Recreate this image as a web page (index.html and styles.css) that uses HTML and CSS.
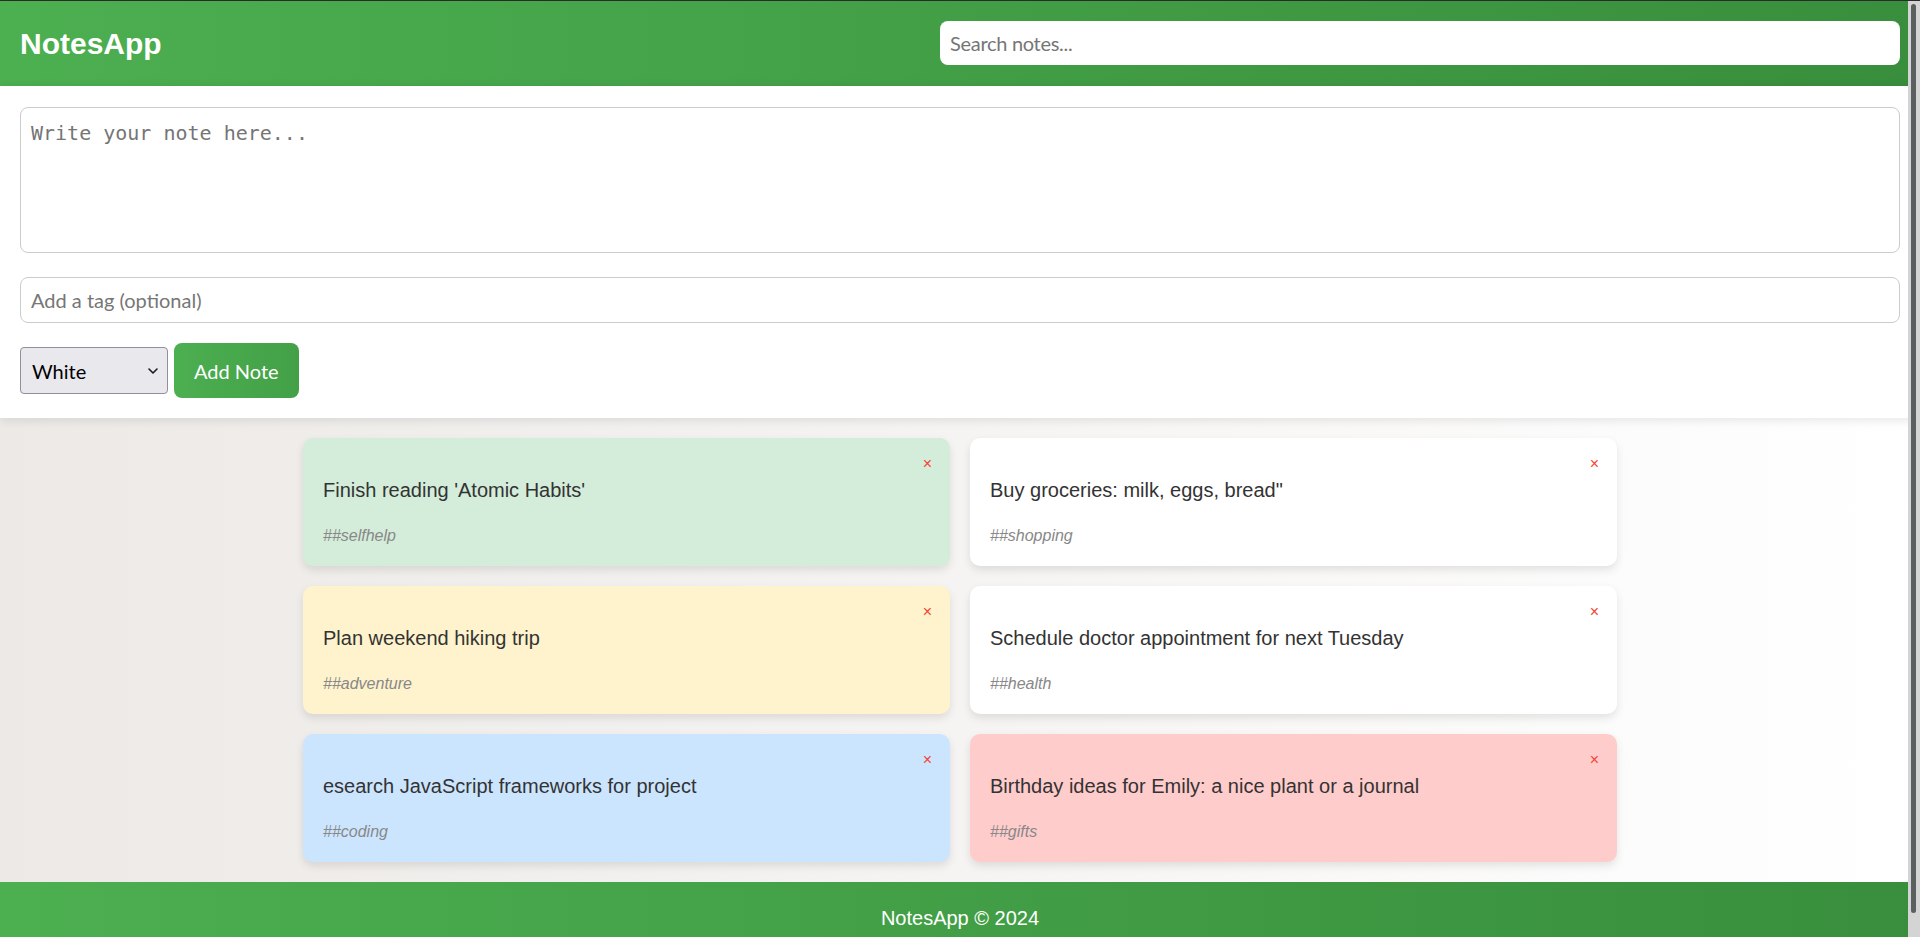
FILE: index.html
```html
<!DOCTYPE html>
<html lang="en">
<head>
<meta charset="UTF-8">
<title>NotesApp</title>
<link rel="stylesheet" href="styles.css">
</head>
<body>
<div class="window-edge"></div>
<div class="scroll-track"><div class="scroll-thumb"></div></div>

<header class="top-bar">
  <h1 class="brand">NotesApp</h1>
  <input class="search" type="text" placeholder="Search notes...">
</header>

<section class="composer">
  <textarea class="note-input" placeholder="Write your note here..."></textarea>
  <input class="tag-input" type="text" placeholder="Add a tag (optional)">
  <div class="controls">
    <div class="select-wrap">
      <select class="color-select">
        <option>White</option>
        <option>Green</option>
        <option>Yellow</option>
        <option>Blue</option>
        <option>Red</option>
      </select>
      <svg class="chevron" width="12" height="8" viewBox="0 0 12 8" aria-hidden="true">
        <path d="M2 2 L6 6 L10 2" fill="none" stroke="#1a1a1a" stroke-width="1.6" stroke-linecap="round" stroke-linejoin="round"/>
      </svg>
    </div>
    <button class="add-btn">Add Note</button>
  </div>
</section>

<main class="notes">
  <div class="note note-green">
    <button class="delete">×</button>
    <p class="note-text">Finish reading 'Atomic Habits'</p>
    <div class="note-tag">##selfhelp</div>
  </div>
  <div class="note note-white">
    <button class="delete">×</button>
    <p class="note-text">Buy groceries: milk, eggs, bread"</p>
    <div class="note-tag">##shopping</div>
  </div>
  <div class="note note-yellow">
    <button class="delete">×</button>
    <p class="note-text">Plan weekend hiking trip</p>
    <div class="note-tag">##adventure</div>
  </div>
  <div class="note note-white">
    <button class="delete">×</button>
    <p class="note-text">Schedule doctor appointment for next Tuesday</p>
    <div class="note-tag">##health</div>
  </div>
  <div class="note note-blue">
    <button class="delete">×</button>
    <p class="note-text">esearch JavaScript frameworks for project</p>
    <div class="note-tag">##coding</div>
  </div>
  <div class="note note-red">
    <button class="delete">×</button>
    <p class="note-text">Birthday ideas for Emily: a nice plant or a journal</p>
    <div class="note-tag">##gifts</div>
  </div>
</main>

<footer class="bottom-bar">NotesApp © 2024</footer>
</body>
</html>
```

FILE: styles.css
```css
html, body {
  margin: 0;
  padding: 0;
}

body {
  font-family: "Liberation Sans", Arial, sans-serif;
  font-size: 16px;
  background: linear-gradient(to right, #ece9e6, #ffffff);
  color: #333;
}

/* browser frame artefacts visible in the screenshot */
.window-edge {
  position: fixed;
  top: 0;
  left: 0;
  right: 0;
  height: 1px;
  background: #2b2b2b;
  z-index: 10;
}

.scroll-track {
  position: fixed;
  top: 0;
  right: 0;
  bottom: 0;
  width: 12px;
  background: #d4d4d4;
  z-index: 9;
}

.scroll-thumb {
  position: absolute;
  top: 4px;
  bottom: 24px;
  left: 3px;
  width: 5px;
  border-radius: 3px;
  background: #5a5f5f;
}

.top-bar {
  display: flex;
  justify-content: space-between;
  align-items: center;
  padding: 21px 20px;
  background: linear-gradient(to right, #4caf50, #388e3c);
}

.brand {
  margin: 2px 0 0;
  font-size: 30px;
  font-weight: bold;
  color: #fff;
}

.search {
  width: 50%;
  height: 24px;
  padding: 10px;
  border: none;
  border-radius: 8px;
  font-family: Lato, "Noto Sans", sans-serif;
  font-size: 20px;
  letter-spacing: -0.3px;
  background: #fff;
  outline: none;
}

.search::placeholder,
.tag-input::placeholder {
  color: #767676;
}

.composer {
  background: #fff;
  padding: 21px 20px 20px;
  box-shadow: 0 2px 10px rgba(0, 0, 0, 0.1);
  display: flex;
  flex-direction: column;
}

.note-input {
  display: block;
  box-sizing: border-box;
  width: 100%;
  height: 146px;
  padding: 13px 10px 10px;
  border: 1px solid #ccc;
  border-radius: 8px;
  font-family: "DejaVu Sans Mono", monospace;
  font-size: 20px;
  resize: none;
  margin: 0 0 24px;
}

.note-input::placeholder {
  color: #757575;
}

.tag-input {
  display: block;
  box-sizing: border-box;
  width: 100%;
  height: 46px;
  padding: 10px;
  border: 1px solid #ccc;
  border-radius: 8px;
  font-family: Lato, "Noto Sans", sans-serif;
  font-size: 20px;
  margin: 0 0 20px;
}

.controls {
  display: flex;
  align-items: center;
  gap: 6px;
}

.select-wrap {
  position: relative;
  width: 148px;
  height: 47px;
}

.color-select {
  appearance: none;
  -webkit-appearance: none;
  width: 148px;
  height: 47px;
  box-sizing: border-box;
  padding: 0 30px 0 11px;
  border: 1px solid #8f8f9d;
  border-radius: 4px;
  background: #e9e9ed;
  color: #000;
  font-family: Lato, "Noto Sans", sans-serif;
  font-size: 20px;
}

.chevron {
  position: absolute;
  right: 9px;
  top: 20px;
  pointer-events: none;
}

.add-btn {
  height: 55px;
  box-sizing: border-box;
  padding: 0 20px;
  border: none;
  border-radius: 8px;
  background: linear-gradient(to right, #4caf50, #43a047);
  color: #fff;
  font-family: Lato, "Noto Sans", sans-serif;
  font-size: 20px;
  cursor: pointer;
}

.notes {
  width: 1314px;
  margin: 20px auto;
  display: grid;
  grid-template-columns: 1fr 1fr;
  gap: 20px;
}

.note {
  position: relative;
  padding: 20px;
  border-radius: 10px;
  box-shadow: 0 4px 8px rgba(0, 0, 0, 0.1);
}

.note-white { background: #ffffff; }
.note-green { background: #d4edda; }
.note-yellow { background: #fff3cd; }
.note-blue { background: #cce5ff; }
.note-red { background: #ffcccc; }

.note-text {
  margin: 21px 0 24px;
  font-size: 20px;
  color: #333;
}

.note-tag {
  font-size: 16px;
  line-height: 20px;
  font-style: italic;
  color: #888;
}

.delete {
  position: absolute;
  top: 18px;
  right: 18px;
  padding: 0;
  border: none;
  background: none;
  color: #f44336;
  font-family: "Liberation Sans", Arial, sans-serif;
  font-size: 16px;
  line-height: 16px;
  cursor: pointer;
}

.bottom-bar {
  padding: 25px 20px 24px;
  text-align: center;
  color: #fff;
  font-size: 20px;
  background: linear-gradient(to right, #4caf50, #388e3c);
}
```
